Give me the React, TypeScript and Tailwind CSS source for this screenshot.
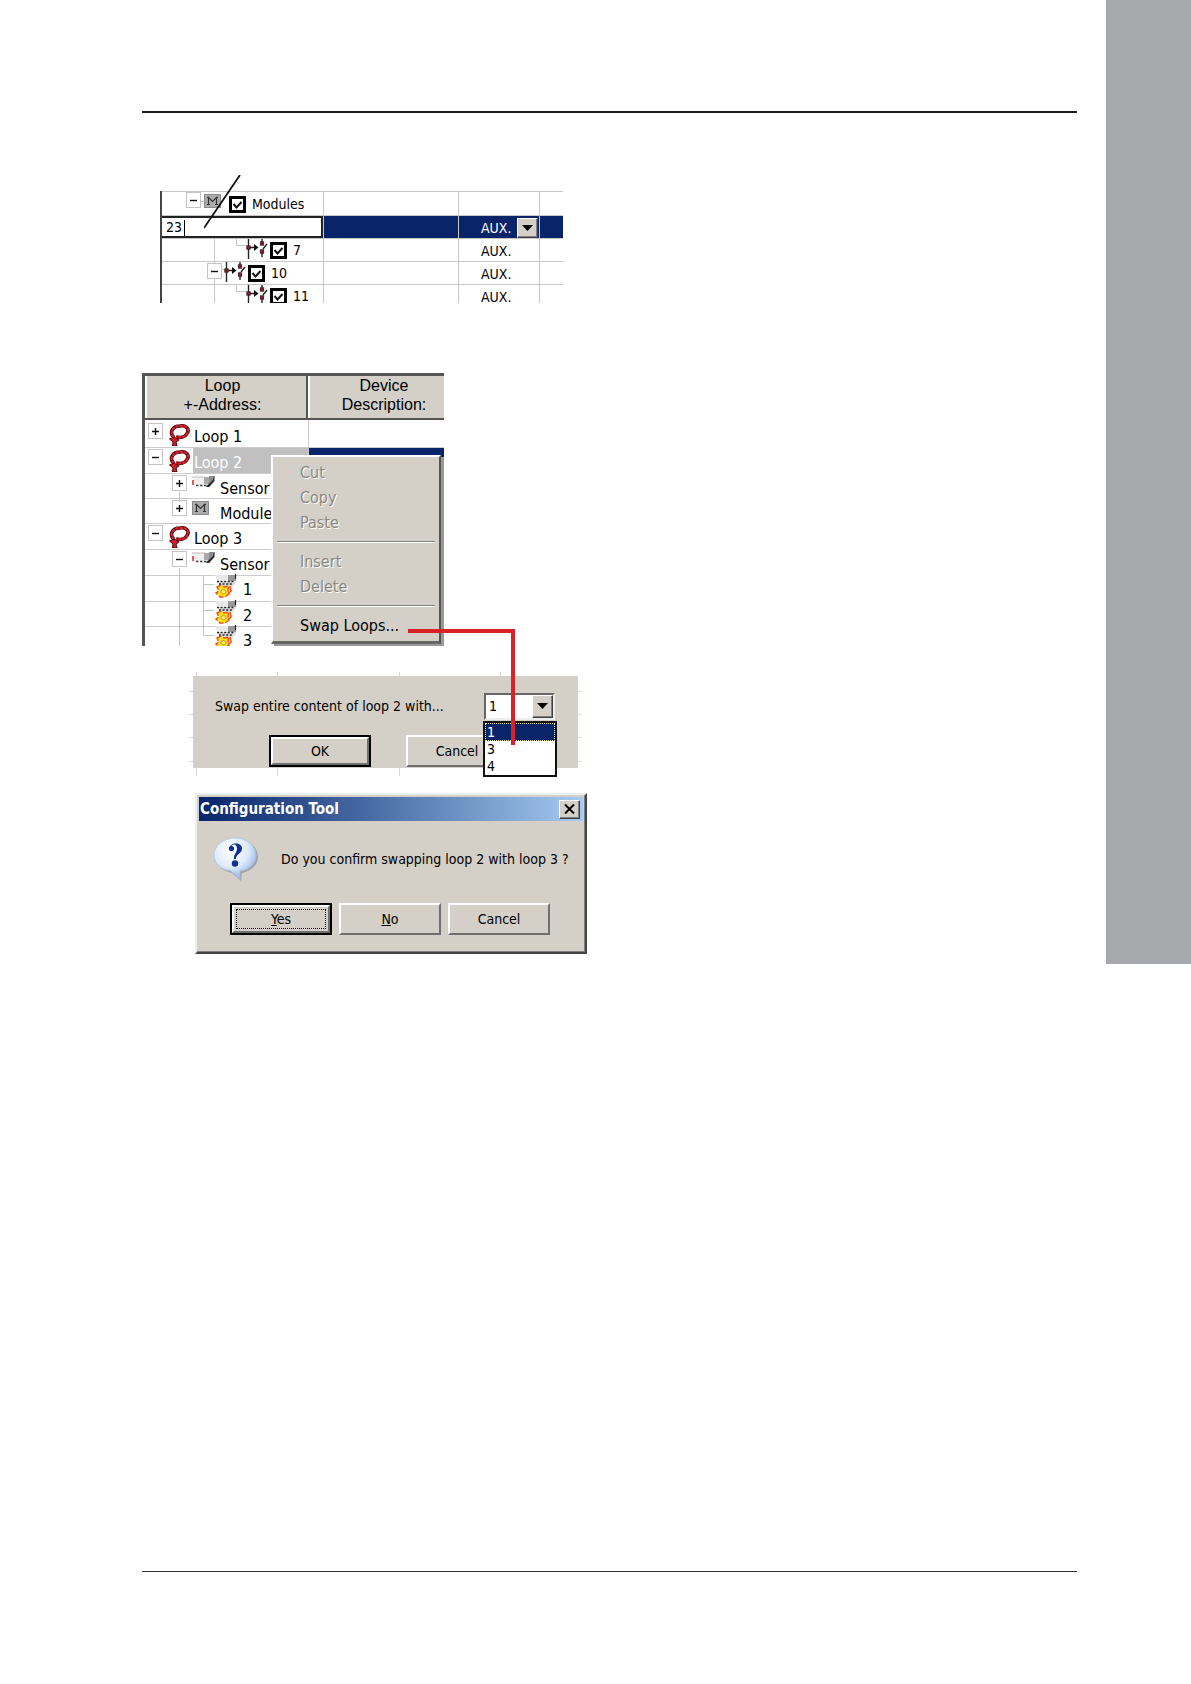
import React from "react";

const tahoma = "font-['DejaVu_Sans_Condensed','Noto_Sans',sans-serif]";

function Toggle({ open }: { open: boolean }) {
  return (
    <button
      type="button"
      aria-label={open ? "Collapse" : "Expand"}
      className="grid h-4 w-[15px] shrink-0 place-items-center border border-[#c4c4c4] bg-white"
    >
      <svg width="7" height="7" viewBox="0 0 7 7" stroke="#111" strokeWidth="1.4" aria-hidden="true">
        <path d={open ? "M0 3.5H7" : "M0 3.5H7M3.5 0V7"} />
      </svg>
    </button>
  );
}

function ModuleIcon() {
  return (
    <svg className="shrink-0" width="17" height="14" viewBox="0 0 17 14" aria-hidden="true">
      <rect x=".5" y=".5" width="16" height="13" fill="#ababab" stroke="#8a8a8a" />
      <path d="M4.5 10.5V3.500L8.500 7.500L12.500 3.500V10.500M3 3.500H5M12 3.500H14M3 10.500H6M11 10.500H14" fill="none" stroke="#333" strokeWidth="1.2" />
    </svg>
  );
}

function SwitchIcon() {
  return (
    <svg className="shrink-0" width="23" height="20" viewBox="0 0 23 20" aria-hidden="true">
      <path d="M3.5 0V20M3.5 8.500H11M17 0V5M17 12V18M18 10L22 5" fill="none" stroke="#222" strokeWidth="1.4" />
      <path d="M9 5L13.500 8.500L9 12Z" fill="#111" />
      <g fill="#a3122c" stroke="#222" strokeWidth=".8">
        <rect x="1.8" y="6.8" width="3.4" height="3.4" />
        <rect x="15.3" y="2.8" width="3.4" height="3.4" />
        <rect x="15.3" y="10.8" width="3.4" height="3.4" />
      </g>
    </svg>
  );
}

function LoopIcon() {
  return (
    <svg className="shrink-0" width="22" height="22" viewBox="0 0 22 22" fill="none" aria-hidden="true">
      <path d="M6 13.500C1 9 4 2 12 2C18 1 22 5 19 9.500C17 13.500 12 14 8 13" stroke="#3d0508" strokeWidth="3.6" />
      <path d="M6 13.500C1 9 4 2 12 2C18 1 22 5 19 9.500C17 13.500 12 14 8 13" stroke="#dc222c" strokeWidth="2.2" strokeDasharray="3.500 .7" />
      <path d="M1.500 15L6 13L11 16L8 18L9 22H4.500L5 18Z" fill="#d01e28" stroke="#4a060a" />
    </svg>
  );
}

function SensorIcon() {
  return (
    <svg className="shrink-0" width="23" height="14" viewBox="0 0 23 14" aria-hidden="true">
      <path d="M0 1H14V9H2Z" fill="#f0f0f0" />
      <path d="M0 1H13" stroke="#bbb" />
      <path d="M12 1H18V8H12Z" fill="#a9a9a9" />
      <path d="M17 0H23V5L17 11H14L17 6Z" fill="#8d8d8d" />
      <path d="M22 0V5L17 11H14L21 4Z" fill="#222" />
      <path d="M4 9.500H16" stroke="#444" strokeWidth="1.4" strokeDasharray="2.500 1.500" />
      <path d="M1 4V9" stroke="#e83030" strokeWidth="1.6" />
    </svg>
  );
}

function DetectorIcon() {
  return (
    <svg className="shrink-0" width="22" height="24" viewBox="0 0 22 24" aria-hidden="true">
      <path d="M0 1H14V6H2Z" fill="#e9e9e9" />
      <path d="M13 1H21V7H13Z" fill="#999" />
      <path d="M2 7H21V8L18 12H5Z" fill="#ddd" />
      <path d="M2 7.5H20M4 10H18" stroke="#222" strokeWidth="1.6" strokeDasharray="2 1.6" />
      <path d="M20.500 0V5" stroke="#222" strokeWidth="1.2" />
      <path d="M2 13L6 11L9 13L14 12L13 16L14 20L10 23H5L1 19L4 17Z" fill="#ffe21a" stroke="#ef4a18" strokeWidth="1.4" strokeDasharray="5 2" />
      <path d="M6 17.5C6 15 11 15 11 18C10 21 6 20 6 17.5" fill="#fff27a" stroke="#a67a10" strokeWidth=".8" />
      <path d="M15 12L16 17L13 20" fill="none" stroke="#ef4a1c" strokeWidth="1.6" />
    </svg>
  );
}

function Check({ label }: { label: string }) {
  return (
    <label className="flex items-center leading-[17px]">
      <span className="grid shrink-0">
        <input type="checkbox" defaultChecked className="col-start-1 row-start-1 size-[17px] appearance-none border-[3px] border-black bg-white" />
        <svg className="pointer-events-none col-start-1 row-start-1 m-auto" width="11" height="10" viewBox="0 0 11 10" aria-hidden="true">
          <path d="M1.500 4L4.500 7.500L9.500 2" fill="none" stroke="#111" strokeWidth="2" />
        </svg>
      </span>
      <span className="ml-[6px]">{label}</span>
    </label>
  );
}

function Arrow() {
  return (
    <svg width="11" height="6" viewBox="0 0 11 6" aria-hidden="true">
      <path d="M0 0H11L5.5 6Z" fill="#000" />
    </svg>
  );
}

const raised =
  "border border-t-white border-l-white border-r-[#404040] border-b-[#404040] bg-[#d4d0c8] shadow-[inset_-1px_-1px_0_#808080]";

function SwitchNode({ label, nested }: { label: string; nested?: boolean }) {
  return (
    <div className={`flex h-[22px] items-start ${nested ? "pl-[83px]" : "pl-[45px]"}`}>
      {!nested && <div className="mt-px mr-px"><Toggle open /></div>}
      <SwitchIcon />
      <div className="ml-[2px] pt-[3px]"><Check label={label} /></div>
    </div>
  );
}

function AddressTable() {
  const line = "border-t border-[#c9c7c3] p-0";
  const side = "border-l border-[#c9c7c3]";
  const rows = [
    { key: "edit", node: null },
    { key: "7", node: <SwitchNode label="7" nested /> },
    { key: "10", node: <SwitchNode label="10" /> },
    { key: "11", node: <SwitchNode label="11" nested /> },
  ];
  return (
    <section className="relative ml-[18px] mt-[78px] w-[403px]">
      <div className={`h-[112px] overflow-hidden border-l-2 border-[#444] text-[14px] leading-[22px] ${tahoma}`}>
        <svg className="absolute left-0 top-0" width="162" height="112" fill="none" stroke="#c9c7c3" aria-hidden="true">
          <path d="M40 10.5H46M54.5 46V112M76.5 46V54.5H86M76.5 94V100.500H86M60 78.500H66" />
        </svg>
        <table className="relative w-full table-fixed border-separate border-spacing-0">
          <colgroup>
            <col className="w-[161px]" />
            <col className="w-[135px]" />
            <col className="w-[81px]" />
            <col />
          </colgroup>
          <tbody>
            <tr>
              <td className={line}>
                <div className="flex h-[23px] items-start pl-6">
                  <Toggle open />
                  <div className="ml-[3px] mt-[2px]"><ModuleIcon /></div>
                  <div className="ml-2 pt-1"><Check label="Modules" /></div>
                </div>
              </td>
              <td className={`${line} ${side}`} />
              <td className={`${line} ${side}`} />
              <td className={`${line} ${side}`} />
            </tr>
            {rows.map((r) => {
              const selected = r.key === "edit";
              const fill = selected ? "bg-[#0a246a] text-white" : "";
              return (
                <tr key={r.key}>
                  <td className={line}>
                    {selected ? (
                      <input
                        aria-label="Address"
                        defaultValue="23"
                        className="block h-[22px] w-full border-y-2 border-r-2 border-[#222] bg-white pl-1 outline-none"
                      />
                    ) : (
                      r.node
                    )}
                  </td>
                  <td className={`${line} ${side} ${fill}`} />
                  <td className={`${line} ${side} ${fill}`}>
                    <div className="flex h-[22px] items-center pl-[22px] pt-px">
                      <span className="w-9">AUX.</span>
                      {selected && (
                        <button type="button" aria-label="Choose type" className={`grid h-5 w-[21px] place-items-center ${raised}`}>
                          <Arrow />
                        </button>
                      )}
                    </div>
                  </td>
                  <td className={`${line} ${side} ${fill}`} />
                </tr>
              );
            })}
          </tbody>
        </table>
      </div>
      <svg className="pointer-events-none absolute -top-4 left-11" width="40" height="56" aria-hidden="true">
        <path d="M36 0L0 53" stroke="#111" strokeWidth="1.8" />
      </svg>
      <span className="absolute left-6 top-[29px] h-4 w-px bg-black" />
    </section>
  );
}

const tree = [
  { h: "h-7", level: 0, open: false, label: "Loop 1", first: true },
  { h: "h-[26px]", level: 0, open: true, label: "Loop 2", selected: true },
  { h: "h-[25px]", level: 1, open: false, label: "Sensor" },
  { h: "h-[25px]", level: 1, open: false, label: "Module", module: true },
  { h: "h-[26px]", level: 0, open: true, label: "Loop 3" },
  { h: "h-[26px]", level: 1, open: true, label: "Sensor" },
  { h: "h-[26px]", level: 2, label: "1" },
  { h: "h-[25px]", level: 2, label: "2" },
  { h: "h-[26px]", level: 2, label: "3" },
];

function MenuItem({ children, disabled }: { children: string; disabled?: boolean }) {
  return (
    <button
      type="button"
      role="menuitem"
      disabled={disabled}
      className="block h-[25px] w-full pl-[27px] text-left text-black disabled:text-[#8a8883] disabled:[text-shadow:1px_1px_0_#fff]"
    >
      {children}
    </button>
  );
}

function LoopTree() {
  const head = "h-[42px] bg-[#d4d0c8] text-center leading-[19px] border-l-2 border-white";
  return (
    <section className={`relative mt-[70px] w-[302px] text-[16px] ${tahoma}`}>
      <div className="h-[273px] overflow-hidden border-l-3 border-t-3 border-[#555]">
        <div className="flex border-b-2 border-[#555] font-['Liberation_Sans',sans-serif]">
          <div className={`w-[163px] border-r-2 border-r-[#555] pr-2 ${head}`}>Loop<br />+-Address:</div>
          <div className={`flex-1 pl-[14px] ${head}`}>Device<br />Description:</div>
        </div>
        <svg className="pointer-events-none absolute left-0 top-[47px]" width="160" height="226" fill="none" stroke="#c4c4c4" aria-hidden="true">
          <path d="M37.5 72V82M37.5 148V226M61.500 156V216M61 164.500H72M61 190.500H72M61 215.500H72" />
        </svg>
        {tree.map((n, i) => (
          <div key={i} className={`flex ${n.h}`}>
            <div className={`flex w-[163px] items-start border-b border-[#ccc] ${n.first ? "pt-[2px]" : ""}`}>
              {n.level === 0 && <div className="mt-px flex pl-[3px] pr-[5px]"><Toggle open={!!n.open} /></div>}
              {n.level === 1 && <div className="mt-px flex pl-[27px] pr-[5px]"><Toggle open={!!n.open} /></div>}
              {n.level === 2 && <div className="w-[70px]" />}
              <div className="relative w-[22px] pt-[2px]">
                {n.level === 0 ? <LoopIcon /> : n.level === 2 ? <div className="-mt-1"><DetectorIcon /></div> : n.module ? <ModuleIcon /> : <SensorIcon />}
              </div>
              <div className={`ml-[3px] flex-1 self-stretch leading-[22px] ${n.level === 2 ? "pt-[3px]" : "pt-1"} ${n.selected ? "bg-[#c0c0c0] text-white" : ""} ${n.level === 0 ? "pl-px" : "pl-[3px]"}`}>
                {n.label}
              </div>
            </div>
            <div className={`flex-1 border-b border-l border-[#ccc] ${n.selected ? "bg-[#0a246a]" : ""}`} />
          </div>
        ))}
      </div>
      <div
        role="menu"
        className="absolute left-[129px] top-[82px] h-[189px] w-[170px] border-2 border-b-[3px] border-t-white border-l-white border-b-[#666] border-r-[#555] bg-[#d4d0c8] pt-[3px] leading-[25px] shadow-[3px_2px_0_#999]"
      >
        <MenuItem disabled>Cut</MenuItem>
        <MenuItem disabled>Copy</MenuItem>
        <MenuItem disabled>Paste</MenuItem>
        <hr className="mx-1 my-[6px] h-[2px] border-0 border-b border-t border-b-white border-t-[#808080]" />
        <MenuItem disabled>Insert</MenuItem>
        <MenuItem disabled>Delete</MenuItem>
        <hr className="mx-1 my-[6px] h-[2px] border-0 border-b border-t border-b-white border-t-[#808080]" />
        <MenuItem>Swap Loops...</MenuItem>
      </div>
      <svg className="pointer-events-none absolute left-[266px] top-[256px] z-10" width="108" height="117" aria-hidden="true">
        <path d="M0 2H105V116" fill="none" stroke="#da2128" strokeWidth="4" />
      </svg>
    </section>
  );
}

function DialogButton({ children, primary, focus }: { children: React.ReactNode; primary?: boolean; focus?: boolean }) {
  return (
    <button type="button" className={`h-8 w-[102px] shrink-0 ${primary ? "border-2 border-black" : ""}`}>
      <span className={`flex h-full items-center justify-center border-2 border-b-[#707070] border-l-white border-r-[#707070] border-t-white bg-[#d4d0c8] ${focus ? "p-[2px]" : ""}`}>
        <span className={focus ? "flex h-full w-full items-center justify-center border border-dotted border-black" : ""}>
          <span>{children}</span>
        </span>
      </span>
    </button>
  );
}

function SwapDialog() {
  return (
    <section className={`relative ml-[51px] mt-[30px] h-[92px] w-[385px] bg-[#d4d0c8] text-[14px] leading-[18px] ${tahoma}`}>
      <svg className="pointer-events-none absolute -left-1 -top-1" width="392" height="104" stroke="#d8d8d8" aria-hidden="true">
        <path d="M7.500 0V4M88.500 0V4M210.500 0V4M311.500 0V4M7.500 96V104M88.500 96V104M210.500 96V104M0 19.500H4M0 42.500H4M0 65.500H4M0 89.500H4M389 19.500H392M389 42.500H392M389 65.500H392M389 89.500H392" />
      </svg>
      <div className="flex h-[60px] items-center pl-[22px]">
        <label htmlFor="swap-target" className="w-[269px]">Swap entire content of loop 2 with...</label>
        <div className="relative">
          <select id="swap-target" defaultValue="1" className="block h-[27px] w-[71px] appearance-none border-2 border-b-[#eee] border-l-[#666] border-r-[#eee] border-t-[#666] bg-white pl-[3px] outline-none">
            <option>1</option>
            <option>3</option>
            <option>4</option>
          </select>
          <span className={`pointer-events-none absolute right-[2px] top-[2px] grid h-[23px] w-[21px] place-items-center ${raised}`}>
            <Arrow />
          </span>
          <ul role="listbox" aria-label="Loops" className="absolute -left-px top-[28px] w-[74px] border-2 border-[#111] bg-white">
            <li role="option" aria-selected="true" className="border border-dotted border-[#e8e8a0] bg-[#0a246a] pl-px leading-[16px] text-white">1</li>
            <li role="option" aria-selected="false" className="pl-[2px] leading-[17px]">3</li>
            <li role="option" aria-selected="false" className="pl-[2px] leading-[17px]">4</li>
          </ul>
        </div>
      </div>
      <div className="-mt-px flex gap-[35px] pl-[76px]">
        <DialogButton primary>OK</DialogButton>
        <DialogButton>Cancel</DialogButton>
      </div>
    </section>
  );
}

function QuestionIcon() {
  return (
    <svg className="shrink-0" width="46" height="46" viewBox="0 0 46 46" aria-hidden="true">
      <defs>
        <radialGradient id="bubble" cx=".4" cy=".3" r=".75">
          <stop offset="0" stopColor="#fff" />
          <stop offset=".55" stopColor="#deebfa" />
          <stop offset="1" stopColor="#86aee2" />
        </radialGradient>
      </defs>
      <path d="M24 4C36 4 45 11 45 21C45 29 38 35 29 37L28 45L19 37C9 35 3 29 3 21C3 11 12 4 24 4Z" fill="#8f9196" opacity=".7" />
      <path d="M22 2C34 2 43 10 43 19C43 28 36 34 27 35V43L18 35C8 34 1 28 1 19C1 10 10 2 22 2Z" fill="url(#bubble)" stroke="#a9bfdd" strokeWidth=".7" />
      <path d="M16.500 13C16 6 29 5.500 29 12.500C29 17.500 23 18 22.800 23H21C20.500 18 24 17 24 12.500C24 8 20 7.500 18.500 10Z" fill="#102f91" />
      <circle cx="18.500" cy="12.500" r="2.600" fill="#102f91" />
      <circle cx="22" cy="27.500" r="3.200" fill="#102f91" />
    </svg>
  );
}

function ConfirmDialog() {
  return (
    <section
      role="dialog"
      aria-labelledby="dialog-title"
      className={`ml-[53px] mt-[25px] h-[161px] w-[392px] border-2 border-b-[#444] border-l-[#eee] border-r-[#444] border-t-[#eee] bg-[#d4d0c8] p-[2px] text-[14px] shadow-[inset_-1px_-1px_0_#808080] ${tahoma}`}
    >
      <div className="flex h-6 items-center justify-between bg-linear-to-r from-[#0a246a] to-[#a6caf0] pl-px pr-[3px]">
        <h2 id="dialog-title" className="text-[15px] font-bold leading-5 text-white">Configuration Tool</h2>
        <button type="button" aria-label="Close" className={`grid h-[19px] w-[21px] place-items-center ${raised}`}>
          <svg width="11" height="10" viewBox="0 0 11 10" aria-hidden="true">
            <path d="M1 0.500L10 9.500M10 .5L1 9.500" stroke="#000" strokeWidth="2" />
          </svg>
        </button>
      </div>
      <div className="flex items-center pl-[14px] pt-[15px]">
        <QuestionIcon />
        <p className="ml-[22px] whitespace-nowrap">Do you confirm swapping loop 2 with loop 3 ?</p>
      </div>
      <div className="mt-[21px] flex gap-[7px] pl-[31px]">
        <DialogButton primary focus><u>Y</u>es</DialogButton>
        <DialogButton><u>N</u>o</DialogButton>
        <DialogButton>Cancel</DialogButton>
      </div>
    </section>
  );
}

export default function App() {
  return (
    <div className="flex min-h-screen bg-white text-black">
      <main className="flex flex-1 flex-col pb-28 pl-[142px] pr-[29px] pt-[111px]">
        <hr className="border-0 border-t-2 border-[#1a1a1a]" />
        <AddressTable />
        <LoopTree />
        <SwapDialog />
        <ConfirmDialog />
        <hr className="mt-auto border-0 border-t border-[#333]" />
      </main>
      <aside className="h-[964px] w-[85px] bg-[#a7a9ac]" />
    </div>
  );
}
